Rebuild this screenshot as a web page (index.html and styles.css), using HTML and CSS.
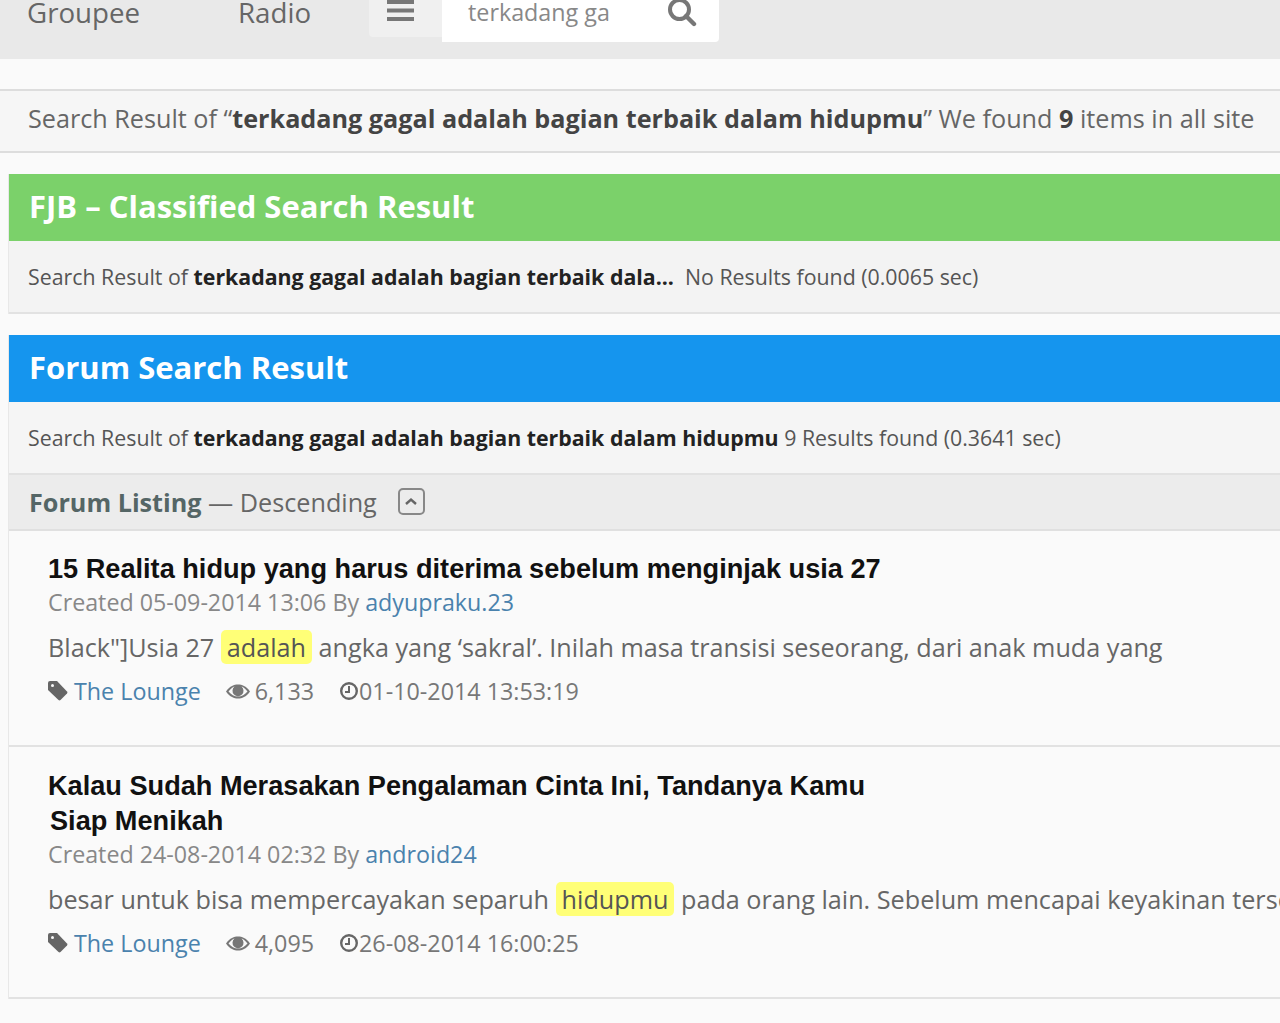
FILE: index.html
```html
<!DOCTYPE html>
<html>
<head>
  <meta charset="utf-8">
  <title>Search Result</title>
  <link rel="stylesheet" href="styles.css">
</head>
<body>

<div class="topnav">
  <div class="topnav-row">
    <a class="nav-link nav-groupee">Groupee</a>
    <a class="nav-link nav-radio">Radio</a>
    <div class="nav-menu">
      <svg width="27" height="22" viewBox="0 0 27 22"><path d="M0 0h27v4H0zM0 8.500h27v4H0zM0 17h27v4H0z" fill="#777"/></svg>
    </div>
    <div class="nav-search">
      <span class="nav-search-text">terkadang ga</span>
      <svg width="30" height="30" viewBox="0 0 30 30"><circle cx="12.500" cy="12.500" r="9.500" fill="none" stroke="#777" stroke-width="4"/><path d="M19 19l8 8" stroke="#777" stroke-width="4.400" stroke-linecap="round"/></svg>
    </div>
  </div>
</div>

<div class="summary">
  Search Result of “<strong>terkadang gagal adalah bagian terbaik dalam hidupmu</strong>” We found <strong>9</strong> items in all site
</div>

<div class="panel">
  <h2 class="panel-head head-green">FJB – Classified Search Result</h2>
  <div class="panel-info info-fjb">
    Search Result of <strong>terkadang gagal adalah bagian terbaik dala...</strong>&nbsp; No Results found (0.0065 sec)
  </div>
</div>

<div class="panel">
  <h2 class="panel-head head-blue">Forum Search Result</h2>
  <div class="panel-info">
    Search Result of <strong>terkadang gagal adalah bagian terbaik dalam hidupmu</strong> 9 Results found (0.3641 sec)
  </div>
  <div class="listing-bar">
    <span><strong>Forum Listing</strong> — Descending</span>
    <span class="sort-btn">
      <svg width="14" height="9" viewBox="0 0 14 9"><path d="M2 7l5-4.500 5 4.500" fill="none" stroke="#666" stroke-width="2.400"/></svg>
    </span>
  </div>

  <div class="result">
    <h3 class="result-title">15 Realita hidup yang harus diterima sebelum menginjak usia 27</h3>
    <div class="result-created">Created 05-09-2014 13:06 By <a>adyupraku.23</a></div>
    <div class="result-text">Black"]Usia 27 <mark>adalah</mark> angka yang ‘sakral’. Inilah masa transisi seseorang, dari anak muda yang</div>
    <div class="result-meta">
      <svg class="icon-tag" width="20" height="20" viewBox="0 0 20 20"><path d="M0 2A2 2 0 0 1 2 0h7l10 10.500a1.500 1.500 0 0 1 0 2L12.500 19a1.500 1.500 0 0 1-2 0L0 9z" fill="#666"/><circle cx="4.500" cy="4.500" r="1.500" fill="#f9f9f9"/></svg>
      <a class="meta-forum">The Lounge</a>
      <svg class="icon-eye" width="24" height="15" viewBox="0 0 24 15"><path d="M0 7.500C4 2 8 .5 12 .5s8 1.500 12 7c-4 5.500-8 7-12 7s-8-1.500-12-7z" fill="#777"/><path d="M2.500 7.500C5 4.500 7 3 8.500 2.500a5.500 5.500 0 1 0 7 0C17 3 19 4.500 21.500 7.500 19 10.500 15.500 12.500 12 12.500S5 10.500 2.500 7.500z" fill="#f9f9f9"/><circle cx="12" cy="6.500" r="4" fill="#777"/></svg>
      <span class="meta-views">6,133</span>
      <svg class="icon-clock" width="20" height="20" viewBox="0 0 20 20"><circle cx="10" cy="10" r="7.800" fill="none" stroke="#666" stroke-width="2.400"/><path d="M10 5v6H6" fill="none" stroke="#666" stroke-width="2"/></svg>
      <span>01-10-2014 13:53:19</span>
    </div>
  </div>

  <div class="result result-long">
    <h3 class="result-title">Kalau Sudah Merasakan Pengalaman Cinta Ini, Tandanya Kamu<br><span class="title-cont">Siap Menikah</span></h3>
    <div class="result-created">Created 24-08-2014 02:32 By <a>android24</a></div>
    <div class="result-text">besar untuk bisa mempercayakan separuh <mark>hidupmu</mark> pada orang lain. Sebelum mencapai keyakinan tersebut</div>
    <div class="result-meta">
      <svg class="icon-tag" width="20" height="20" viewBox="0 0 20 20"><path d="M0 2A2 2 0 0 1 2 0h7l10 10.500a1.500 1.500 0 0 1 0 2L12.500 19a1.500 1.500 0 0 1-2 0L0 9z" fill="#666"/><circle cx="4.500" cy="4.500" r="1.500" fill="#f9f9f9"/></svg>
      <a class="meta-forum">The Lounge</a>
      <svg class="icon-eye" width="24" height="15" viewBox="0 0 24 15"><path d="M0 7.500C4 2 8 .5 12 .5s8 1.500 12 7c-4 5.500-8 7-12 7s-8-1.500-12-7z" fill="#777"/><path d="M2.500 7.500C5 4.500 7 3 8.500 2.500a5.500 5.500 0 1 0 7 0C17 3 19 4.500 21.500 7.500 19 10.500 15.500 12.500 12 12.500S5 10.500 2.500 7.500z" fill="#f9f9f9"/><circle cx="12" cy="6.500" r="4" fill="#777"/></svg>
      <span class="meta-views">4,095</span>
      <svg class="icon-clock" width="20" height="20" viewBox="0 0 20 20"><circle cx="10" cy="10" r="7.800" fill="none" stroke="#666" stroke-width="2.400"/><path d="M10 5v6H6" fill="none" stroke="#666" stroke-width="2"/></svg>
      <span>26-08-2014 16:00:25</span>
    </div>
  </div>
</div>

</body>
</html>
```

FILE: styles.css
```css
html, body {
  margin: 0;
  height: 1023px;
  overflow: hidden;
}
body {
  background-color: #fafafa;
  font-family: "Open Sans", sans-serif;
  color: #666;
}
strong {
  font-weight: 700;
}

/* top bar, cut off by the top of the picture */
.topnav {
  height: 59px;
  background-color: #e9e9e9;
}
.topnav-row {
  display: flex;
  align-items: flex-start;
  height: 42px;
  padding-left: 27px;
}
.nav-link {
  font-size: 27.7px;
  line-height: 24px;
  color: #666;
}
.nav-groupee {
  width: 211px;
}
.nav-radio {
  width: 131px;
}
.nav-menu {
  width: 73px;
  height: 37px;
  padding-left: 18px;
  box-sizing: border-box;
  background-color: #f0f0f0;
  border-bottom-left-radius: 4px;
}
.nav-search {
  display: flex;
  align-items: flex-start;
  width: 277px;
  height: 42px;
  background-color: #fff;
  border-bottom-right-radius: 4px;
  box-sizing: border-box;
  padding-left: 26px;
}
.nav-search-text {
  width: 199px;
  font-size: 23.3px;
  line-height: 24px;
  color: #888;
}
.nav-search svg {
  margin-top: -3px;
}

.summary {
  margin-top: 30px;
  height: 60px;
  line-height: 54px;
  padding-left: 28px;
  background-color: #f6f6f6;
  border-top: 2px solid #ddd;
  border-bottom: 2px solid #ddd;
  font-size: 25.2px;
  white-space: nowrap;
}
.summary strong {
  color: #444;
}

.panel {
  margin: 21px 0 0 8px;
  width: 1400px;
  border-left: 1px solid #e8e8e8;
}
.panel-head {
  margin: 0;
  height: 67px;
  line-height: 64px;
  padding-left: 20px;
  font-size: 31px;
  font-weight: 700;
  color: #fff;
}
.head-green {
  background-color: #7bd16a;
}
.head-blue {
  background-color: #1595ee;
}
.panel-info {
  height: 71px;
  line-height: 71px;
  padding-left: 19px;
  background-color: #f5f5f5;
  border-bottom: 2px solid #e2e2e2;
  font-size: 21.33px;
  color: #555;
  white-space: nowrap;
}
.panel-info strong {
  color: #222;
}
.info-fjb {
  background-color: #f3f3f3;
}

.listing-bar {
  display: flex;
  align-items: center;
  height: 54px;
  padding-left: 20px;
  background-color: #ececec;
  border-bottom: 2px solid #e0e0e0;
  font-size: 25.2px;
}
.listing-bar strong {
  color: #566;
}
.sort-btn {
  display: flex;
  align-items: center;
  justify-content: center;
  width: 23px;
  height: 23px;
  margin: -2px 0 0 21px;
  border: 2px solid #888;
  border-radius: 5px;
}

.result {
  height: 216px;
  padding: 20px 0 0 39px;
  box-sizing: border-box;
  border-bottom: 2px solid #e2e2e2;
  white-space: nowrap;
  font-size: 25.2px;
}
.result-long {
  height: 252px;
  padding-top: 21px;
}
.result-title {
  margin: 0;
  font-family: "Liberation Sans", sans-serif;
  font-size: 27.15px;
  line-height: 35px;
  font-weight: 700;
  color: #111;
}
.title-cont {
  margin-left: 2px;
}
.result-created {
  margin-top: -1px;
  font-size: 23.25px;
  line-height: 34px;
  color: #888;
}
.result-created a, .meta-forum {
  color: #4a82ad;
}
.result-text {
  margin-top: 11px;
  line-height: 34px;
  color: #666;
}
mark {
  display: inline-block;
  padding: 0 6px;
  line-height: 34px;
  background-color: #ffff77;
  border-radius: 5px;
  color: #555;
}
.result-meta {
  display: flex;
  align-items: center;
  margin-top: 10px;
  height: 34px;
  font-size: 23.3px;
  color: #777;
}
.icon-tag {
  margin-right: 6px;
}
.icon-eye {
  margin-left: 25px;
  margin-right: 5px;
}
.icon-clock {
  margin-left: 25px;
}
```
